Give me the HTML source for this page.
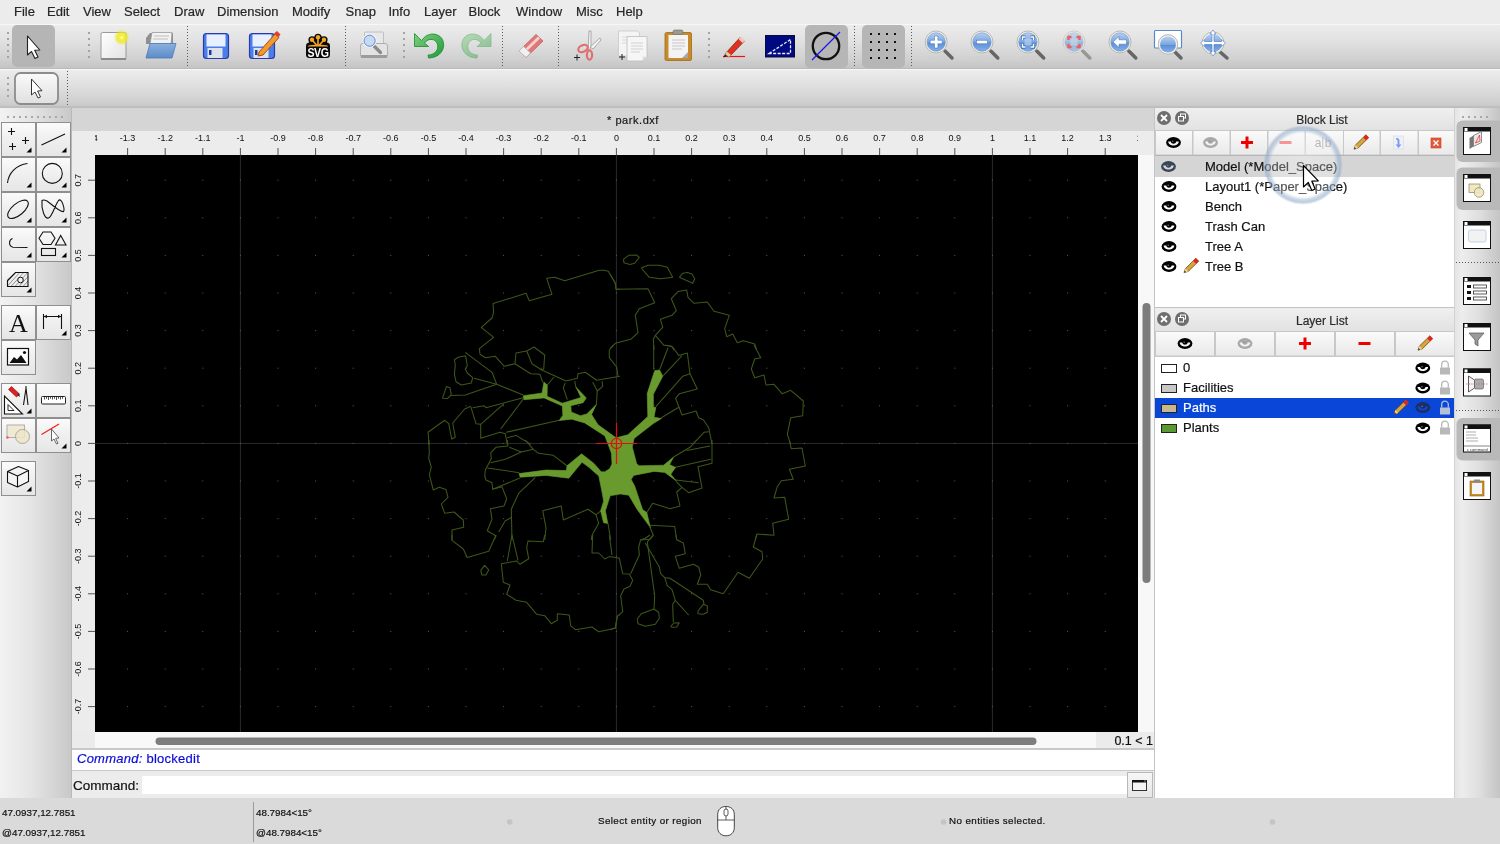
<!DOCTYPE html>
<html><head><meta charset="utf-8">
<style>
*{margin:0;padding:0;box-sizing:border-box}
body{-webkit-text-stroke:0.2px currentColor}
html,body{width:1500px;height:844px;overflow:hidden;will-change:transform;background:#ececec;font-family:"Liberation Sans",sans-serif;color:#222}
.a{position:absolute}
#menubar{left:0;top:0;width:1500px;height:24px;background:#ececec}
#menubar span{position:absolute;top:4px;font-size:13px;color:#262626}
#tb1{left:0;top:24px;width:1500px;height:45px;background:linear-gradient(#ececec,#e2e2e2 35%,#d0d0d0 80%,#c4c4c4);border-top:1px solid #f7f7f7;border-bottom:1px solid #bababa}
#tb2{left:0;top:69px;width:1500px;height:38px;background:linear-gradient(#ececec,#e0e0e0 40%,#d0d0d0 85%,#c8c8c8);border-top:1px solid #f7f7f7}
#tbline{left:0;top:106px;width:1500px;height:2px;background:#bebebe}
#leftdock{left:0;top:108px;width:71px;height:690px;background:linear-gradient(90deg,#f2f2f2,#e6e6e6 40%,#c9c9c9)}
#leftborder{left:71px;top:108px;width:1px;height:690px;background:#b9b9b9}
#mdititle{left:72px;top:108px;width:1083px;height:23px;background:#d5d5d5}
#hruler{left:72px;top:131px;width:1082px;height:24px;background:#ececec}
#vruler{left:72px;top:155px;width:23px;height:577px;background:#ececec}
#canvas{left:95px;top:155px;width:1043px;height:577px;background:#000;overflow:hidden}
#vscroll{left:1138px;top:155px;width:16px;height:577px;background:#f8f8f8}
#hscroll{left:95px;top:732px;width:1001px;height:16px;background:#f8f8f8}
#cornerL{left:72px;top:732px;width:23px;height:16px;background:#ebebeb}
#scalebox{left:1096px;top:732px;width:58px;height:16px;background:#ebebeb;font-size:12.5px;text-align:right;padding-right:1px;line-height:19px;color:#111}
#cmdsep{left:72px;top:748px;width:1082px;height:2px;background:#c8c8c8}
#cmdhist{left:72px;top:750px;width:1082px;height:21px;background:#fff;border-bottom:1px solid #c8c8c8;font-size:13px;line-height:17px;padding-left:5px;color:#0c0cd8;letter-spacing:0.25px}
#cmdline{left:72px;top:771px;width:1082px;height:28px;background:#ececec;font-size:13px;color:#111}
#status{left:0;top:798px;width:1500px;height:46px;background:#dadada}
.st{position:absolute;font-size:9.8px;color:#111;letter-spacing:0px}
#dock{left:1154px;top:108px;width:301px;height:690px;background:#ececec;border-left:1px solid #c2c2c2}
#rtb{left:1455px;top:108px;width:45px;height:690px;background:linear-gradient(90deg,#eeeeee,#dcdcdc 50%,#c6c6c6)}
</style></head><body>
<div id="menubar" class="a">
<span style="left:14px">File</span><span style="left:47px">Edit</span><span style="left:83px">View</span><span style="left:124px">Select</span><span style="left:174px">Draw</span><span style="left:217px">Dimension</span><span style="left:292px">Modify</span><span style="left:345.5px">Snap</span><span style="left:388.5px">Info</span><span style="left:424px">Layer</span><span style="left:468.5px">Block</span><span style="left:516px">Window</span><span style="left:576px">Misc</span><span style="left:616px">Help</span>
</div>
<div id="tb1" class="a"></div>
<div id="tb2" class="a"></div>
<div id="tbline" class="a"></div>
<!--TB1-->
<svg class="a" style="left:0;top:0" width="1500" height="108" viewBox="0 0 1500 108">
<defs>
<linearGradient id="gBlueLens" x1="0" y1="0" x2="0" y2="1"><stop offset="0" stop-color="#b7d0f0"/><stop offset="0.5" stop-color="#7aa6e0"/><stop offset="0.55" stop-color="#5a8fd8"/><stop offset="1" stop-color="#86b0ea"/></linearGradient>
<linearGradient id="gBlueLensF" x1="0" y1="0" x2="0" y2="1"><stop offset="0" stop-color="#d5e2f2"/><stop offset="1" stop-color="#b4c9e6"/></linearGradient>
<linearGradient id="gPage" x1="0" y1="0" x2="1" y2="1"><stop offset="0" stop-color="#ffffff"/><stop offset="1" stop-color="#e2e2e2"/></linearGradient>
<radialGradient id="gGlow"><stop offset="0" stop-color="#ffffe0"/><stop offset="0.25" stop-color="#f8f040"/><stop offset="0.6" stop-color="#eee820" stop-opacity="0.8"/><stop offset="1" stop-color="#eee820" stop-opacity="0"/></radialGradient>
<linearGradient id="gFolder" x1="0" y1="0" x2="0" y2="1"><stop offset="0" stop-color="#8ab0e0"/><stop offset="1" stop-color="#5d8cc8"/></linearGradient>
<linearGradient id="gUndo" x1="0" y1="0" x2="1" y2="1"><stop offset="0" stop-color="#7fd07a"/><stop offset="1" stop-color="#1e9a3a"/></linearGradient>
<linearGradient id="gBtn2" x1="0" y1="0" x2="0" y2="1"><stop offset="0" stop-color="#fafafa"/><stop offset="1" stop-color="#e0e0e0"/></linearGradient>
<g id="lensHandle"><line x1="0" y1="0" x2="8" y2="8" stroke="#6a6a6a" stroke-width="4" stroke-linecap="round"/></g>
</defs>
<!-- handle dots -->
<g fill="#a3a3a3">
<rect x="7" y="32" width="2" height="2"/><rect x="7" y="38" width="2" height="2"/><rect x="7" y="44" width="2" height="2"/><rect x="7" y="50" width="2" height="2"/><rect x="7" y="56" width="2" height="2"/>
<rect x="88" y="32" width="2" height="2"/><rect x="88" y="38" width="2" height="2"/><rect x="88" y="44" width="2" height="2"/><rect x="88" y="50" width="2" height="2"/><rect x="88" y="56" width="2" height="2"/>
<rect x="403" y="32" width="2" height="2"/><rect x="403" y="38" width="2" height="2"/><rect x="403" y="44" width="2" height="2"/><rect x="403" y="50" width="2" height="2"/><rect x="403" y="56" width="2" height="2"/>
<rect x="708" y="32" width="2" height="2"/><rect x="708" y="38" width="2" height="2"/><rect x="708" y="44" width="2" height="2"/><rect x="708" y="50" width="2" height="2"/><rect x="708" y="56" width="2" height="2"/>
<rect x="7" y="77" width="2" height="2"/><rect x="7" y="83" width="2" height="2"/><rect x="7" y="89" width="2" height="2"/><rect x="7" y="95" width="2" height="2"/>
</g>
<!-- fine separators -->
<g stroke="#5a5a5a" stroke-width="1" stroke-dasharray="1 2">
<line x1="187.5" y1="26" x2="187.5" y2="67"/><line x1="345.5" y1="26" x2="345.5" y2="67"/><line x1="502.5" y1="26" x2="502.5" y2="67"/><line x1="558.5" y1="26" x2="558.5" y2="67"/><line x1="854.5" y1="26" x2="854.5" y2="67"/><line x1="911.5" y1="26" x2="911.5" y2="67"/>
<line x1="67.5" y1="71" x2="67.5" y2="106"/>
</g>
<!-- selected select button -->
<rect x="12" y="25" width="43" height="42" rx="5" fill="#b5b5b5"/>
<path d="M27.5 36 L27.5 55 L31.5 51.5 L35 58.5 L38 57 L34.7 50.3 L39.8 50 Z" fill="#fff" stroke="#222" stroke-width="1.1" stroke-linejoin="round"/>
<!-- new -->
<rect x="101" y="32.5" width="25" height="27" rx="1.5" fill="url(#gPage)" stroke="#9a9a9a" stroke-width="1"/>
<rect x="101" y="58" width="25" height="2" fill="#8a8a8a"/>
<circle cx="121.7" cy="37.5" r="8" fill="url(#gGlow)"/>
<!-- open -->
<path d="M146 38 L150 33 L173 33 L173 44 L146 44 Z" fill="#8f8f8f"/>
<path d="M152 32.5 L172 32.5 L171 44 L150 44 Z" fill="#f2f2f2" stroke="#9a9a9a" stroke-width="0.8"/>
<line x1="154" y1="36" x2="169" y2="36" stroke="#bdbdbd"/><line x1="153" y1="39" x2="168" y2="39" stroke="#bdbdbd"/>
<path d="M150 43.5 L176 43.5 L172 58 L146 58 Z" fill="url(#gFolder)" stroke="#4a78b8" stroke-width="0.8"/>
<!-- save -->
<g id="floppy">
<rect x="203.5" y="33.5" width="25" height="25" rx="3" fill="#4a7ee8" stroke="#2a3aa8" stroke-width="1.2"/>
<rect x="206.5" y="34.5" width="19" height="12" fill="#e8f0ff"/>
<rect x="207.5" y="48" width="15" height="10" fill="#dde2ea"/>
<rect x="209" y="50" width="2.5" height="5" fill="#1a3aa0"/>
</g>
<use href="#floppy" x="46"/>
<path d="M259 52 L275 34 L279 37.5 L263 55 L258 56 Z" fill="#f09a30" stroke="#a04010" stroke-width="0.9"/>
<path d="M274 33.5 L277 31 L280.5 34.5 L278.5 37 Z" fill="#e04030"/>
<!-- svg -->
<g>
<rect x="306" y="42.5" width="24" height="15.5" rx="3.5" fill="#0a0a0a"/>
<circle cx="318" cy="37.3" r="3.6" fill="#0a0a0a"/><circle cx="312" cy="39.8" r="3.6" fill="#0a0a0a"/><circle cx="324" cy="39.8" r="3.6" fill="#0a0a0a"/>
<path d="M308 46 L310 40 L314 37 L318 34.5 L322 37 L326 40 L328 46 Z" fill="#0a0a0a"/>
<g stroke="#f5a623" stroke-width="1.6" stroke-linecap="round"><line x1="318" y1="37.5" x2="318" y2="45"/><line x1="312.2" y1="40" x2="316.5" y2="45"/><line x1="323.8" y1="40" x2="319.5" y2="45"/></g>
<circle cx="318" cy="37.3" r="2.2" fill="#f5a623"/><circle cx="312" cy="39.8" r="2.2" fill="#f5a623"/><circle cx="324" cy="39.8" r="2.2" fill="#f5a623"/>
<path d="M308 45.8 C312 44.5 324 44.5 328 45.8 L328 46.4 L308 46.4 Z" fill="#f5a623"/>
<text x="0" y="0" transform="translate(318 57) scale(0.88 1)" font-family="Liberation Sans" font-weight="bold" font-size="12" fill="#fff" text-anchor="middle" letter-spacing="-0.4">SVG</text>
</g>
<!-- print preview -->
<rect x="364.5" y="32" width="19" height="14" rx="1" fill="#e8e8e8" stroke="#b5b5b5" stroke-width="0.8"/>
<rect x="360.5" y="43.5" width="27" height="14" rx="2.5" fill="#e3e3e3" stroke="#a8a8a8" stroke-width="0.9"/>
<rect x="361" y="55" width="26" height="3" fill="#9c9c9c"/>
<line x1="372" y1="44" x2="380.5" y2="52.5" stroke="#8a8a8a" stroke-width="3.2" stroke-linecap="round"/>
<circle cx="369.6" cy="40.7" r="6.3" fill="#d8e6f6" stroke="#ffffff" stroke-width="1.2"/>
<circle cx="369.6" cy="40.7" r="5.6" fill="#c6daf2" stroke="#5a8ad0" stroke-width="1"/>
<!-- undo -->
<path d="M421.5 40.5 C426 34 433 32.5 438.5 35.5 C444 38.5 445 46 442 51 C439.5 55.5 434 58 428.5 58 L428 55 C432.5 55 436.5 52.5 437.5 48.5 C438.5 44 436 40 432 39.5 C429 39 426.5 40.5 424.5 43 L428.5 46.5 L414.5 46.5 L414.5 33.5 L418.5 37.5 Z" fill="url(#gUndo)" stroke="#178a30" stroke-width="0.8"/>
<!-- redo faded -->
<g opacity="0.45"><path d="M484 40.5 C479.5 34 472.5 32.5 467 35.5 C461.5 38.5 460.5 46 463.5 51 C466 55.5 471.5 58 477 58 L477.5 55 C473 55 469 52.5 468 48.5 C467 44 469.5 40 473.5 39.5 C476.5 39 479 40.5 481 43 L477 46.5 L491 46.5 L491 33.5 L487 37.5 Z" fill="url(#gUndo)" stroke="#178a30" stroke-width="0.8"/></g>
<!-- eraser -->
<ellipse cx="531" cy="57.5" rx="11" ry="1.6" fill="#d0d0d0"/>
<path d="M519 51 L536 34.5 L543 41 L526 57.5 Z" fill="#e07878" stroke="#c06060" stroke-width="0.8"/>
<path d="M521 53 L538 36.5 L540 38.5 L523 55 Z" fill="#f4d0d0"/>
<path d="M519 51 L523.5 46.5 L530.5 53 L526 57.5 Z" fill="#f0f0f0" stroke="#bbbbbb" stroke-width="0.8"/>
<!-- scissors -->
<path d="M588 52 L589 31 L591 31 L591 47 Z" fill="#f2f2f2" stroke="#9a9a9a" stroke-width="0.8"/>
<path d="M590 47 L600 38 L601 40 L593 49 Z" fill="#f2f2f2" stroke="#9a9a9a" stroke-width="0.8"/>
<ellipse cx="583" cy="48.5" rx="5" ry="3.2" fill="none" stroke="#e07070" stroke-width="2.2" transform="rotate(-25 583 48.5)"/>
<ellipse cx="589.5" cy="55" rx="2.6" ry="4.6" fill="none" stroke="#e07070" stroke-width="2.2"/>
<path d="M574 57.5 h6 M577 54.5 v6" stroke="#222" stroke-width="1"/>
<!-- copy -->
<path d="M618.5 31 h19 l2 2 v23 h-21 z" fill="#f4f4f4" stroke="#c8c8c8" stroke-width="0.8"/>
<g stroke="#d8d8d8"><line x1="622" y1="37" x2="632" y2="37"/><line x1="622" y1="40" x2="632" y2="40"/><line x1="622" y1="43" x2="632" y2="43"/></g>
<path d="M627 36.5 h20 v20 l-4.5 4.5 h-15.5 z" fill="#f6f6f6" stroke="#bdbdbd" stroke-width="0.8"/>
<path d="M647 56.5 l-4.5 4.5 v-4.5 z" fill="#dddddd"/>
<g stroke="#d0d0d0"><line x1="631" y1="43" x2="643" y2="43"/><line x1="631" y1="46" x2="643" y2="46"/><line x1="631" y1="49" x2="643" y2="49"/><line x1="631" y1="52" x2="640" y2="52"/></g>
<path d="M619 57 h6 M622 54 v6" stroke="#222" stroke-width="1"/>
<!-- paste -->
<rect x="665" y="32.5" width="26.5" height="28" rx="1.5" fill="#c98a2a" stroke="#9a6a20" stroke-width="0.8"/>
<rect x="668.5" y="35" width="19.5" height="23" fill="#f4f4f4"/>
<path d="M688 52 v6 h-6 z" fill="#a8a8a8"/>
<rect x="673" y="30" width="10" height="4.5" rx="1.5" fill="#9a9a90" stroke="#707068" stroke-width="0.6"/>
<g stroke="#c8c8c8"><line x1="672" y1="40" x2="685" y2="40"/><line x1="672" y1="43" x2="685" y2="43"/><line x1="672" y1="46" x2="685" y2="46"/><line x1="672" y1="49" x2="682" y2="49"/></g>
<!-- pencil draw -->
<line x1="723" y1="56.5" x2="745" y2="56.5" stroke="#ee1111" stroke-width="1.2"/>
<path d="M725 54 L740 37.5 L744 41.5 L729 57 Z" fill="#e03020" stroke="#7a2a10" stroke-width="0.8"/>
<path d="M725 54 L723.5 57.5 L727 56 Z" fill="#222"/>
<path d="M725 54 L727 51.5 L731 55 L729 57 Z" fill="#e8c8a0"/>
<path d="M738.5 39 L741 36.5 L745 40.5 L742.5 43 Z" fill="#f0c8c0"/>
<!-- blue triangle -->
<rect x="765.5" y="35.5" width="29" height="21.5" fill="#000a80" stroke="#0a0a40" stroke-width="1"/>
<path d="M769 53.5 L790.5 39.5 L790.5 53.5 Z" fill="none" stroke="#e8e8ff" stroke-width="1.3" stroke-dasharray="3 1.5"/>
<!-- selected circle btn -->
<rect x="805" y="25" width="43" height="43" rx="5" fill="#b6b6b6"/>
<circle cx="826" cy="46" r="13.2" fill="none" stroke="#111" stroke-width="2.3"/>
<line x1="812" y1="60" x2="840" y2="32" stroke="#1a1aee" stroke-width="1.2"/>
<!-- grid btn -->
<rect x="862" y="25" width="43" height="43" rx="5" fill="#b6b6b6"/>
<g fill="#111">
<rect x="870" y="33" width="2" height="2"/><rect x="878" y="33" width="2" height="2"/><rect x="886" y="33" width="2" height="2"/><rect x="894" y="33" width="2" height="2"/>
<rect x="870" y="41" width="2" height="2"/><rect x="878" y="41" width="2" height="2"/><rect x="886" y="41" width="2" height="2"/><rect x="894" y="41" width="2" height="2"/>
<rect x="870" y="49" width="2" height="2"/><rect x="878" y="49" width="2" height="2"/><rect x="886" y="49" width="2" height="2"/><rect x="894" y="49" width="2" height="2"/>
<rect x="870" y="57" width="2" height="2"/><rect x="878" y="57" width="2" height="2"/><rect x="886" y="57" width="2" height="2"/><rect x="894" y="57" width="2" height="2"/>
</g>
<!-- zoom lenses -->
<g id="lens1">
<ellipse cx="940" cy="58" rx="12" ry="2.5" fill="#cfcfcf" opacity="0.7"/>
<line x1="945" y1="51" x2="952" y2="58" stroke="#666" stroke-width="3.5" stroke-linecap="round"/>
<circle cx="936.2" cy="42" r="11" fill="#f0f0ea" stroke="#b8b8b0" stroke-width="1"/>
<circle cx="936.2" cy="42" r="9.2" fill="url(#gBlueLens)" stroke="#6a90c8" stroke-width="0.6"/>
</g>
<path d="M934.5 36 h3.4 v4.3 h4.3 v3.4 h-4.3 v4.3 h-3.4 v-4.3 h-4.3 v-3.4 h4.3 z" fill="#fff" stroke="#3a6ab0" stroke-width="0.5"/>
<use href="#lens1" x="45.8"/>
<rect x="976.5" y="40.2" width="11" height="3.6" fill="#fff" stroke="#3a6ab0" stroke-width="0.5"/>
<use href="#lens1" x="91.7"/>
<rect x="1024.5" y="38.5" width="7" height="7" fill="#b8d0ee" opacity="0.7"/><g fill="none" stroke="#2a5aa8" stroke-width="3"><path d="M1022.5 40 v-3 h3 M1030.5 37 h3 v3 M1033.5 44 v3 h-3 M1025.5 47 h-3 v-3"/></g><g fill="none" stroke="#fff" stroke-width="1.6"><path d="M1022.5 40 v-3 h3 M1030.5 37 h3 v3 M1033.5 44 v3 h-3 M1025.5 47 h-3 v-3"/></g>
<g opacity="0.55"><use href="#lens1" x="137.8"/></g>
<rect x="1070.5" y="38.5" width="7" height="7" fill="#c8d4e4" opacity="0.7"/><g fill="none" stroke="#e86060" stroke-width="2.4"><path d="M1068.5 40 v-3 h3 M1076.5 37 h3 v3 M1079.5 44 v3 h-3 M1071.5 47 h-3 v-3"/></g>
<use href="#lens1" x="183.8"/>
<path d="M1113 42 L1119 36.5 V39.8 H1126.5 V44.2 H1119 V47.5 Z" fill="#fff" stroke="#3a6ab0" stroke-width="0.5"/>
<!-- zoom window -->
<rect x="1154.5" y="30.5" width="27" height="17.5" rx="1" fill="#fff" stroke="#5a88cc" stroke-width="1.2"/>
<line x1="1174" y1="51" x2="1181" y2="58" stroke="#666" stroke-width="3.5" stroke-linecap="round"/>
<circle cx="1168" cy="44.5" r="9.8" fill="#f0f0ea" stroke="#b8b8b0" stroke-width="1"/>
<circle cx="1168" cy="44.5" r="8" fill="url(#gBlueLens)"/>
<!-- pan -->
<line x1="1219" y1="51" x2="1227" y2="58" stroke="#666" stroke-width="3.5" stroke-linecap="round"/>
<circle cx="1213" cy="43" r="11" fill="#f0f0ea" stroke="#b8b8b0" stroke-width="1"/>
<circle cx="1213" cy="43" r="9.2" fill="url(#gBlueLens)"/>
<path d="M1213 30 l-3 4 h2 v7.5 h-7.5 v-2 l-4 3.5 l4 3.5 v-2 h7.5 v7.5 h-2 l3 4 l3 -4 h-2 v-7.5 h7.5 v2 l4 -3.5 l-4 -3.5 v2 h-7.5 v-7.5 h2 z" fill="#fff" stroke="#4a78c0" stroke-width="0.6"/>
<!-- toolbar2 select btn -->
<rect x="15" y="73" width="43" height="31" rx="5.5" fill="url(#gBtn2)" stroke="#8c8c8c" stroke-width="1.8"/>
<path d="M31.5 79 L31.5 95 L35 92 L38 98 L40.5 97 L37.6 91 L42 90.7 Z" fill="#fff" stroke="#333" stroke-width="1" stroke-linejoin="round"/>
</svg>

<!--/TB1-->
<div id="leftdock" class="a"></div>
<div id="leftborder" class="a"></div>
<!--LEFT-->
<svg class="a" style="left:0;top:108px" width="72" height="400" viewBox="0 108 72 400">
<defs>
<linearGradient id="gTbtn" x1="0" y1="0" x2="0" y2="1"><stop offset="0" stop-color="#fbfbfb"/><stop offset="0.45" stop-color="#f0f0f0"/><stop offset="1" stop-color="#e6e6e6"/></linearGradient>
<path id="ctri" d="M0 5 L5 0 L5 5 Z" fill="#000"/>
</defs>
<g fill="#a8a8a8"><rect x="7" y="116" width="2" height="2"/><rect x="13" y="116" width="2" height="2"/><rect x="19" y="116" width="2" height="2"/><rect x="25" y="116" width="2" height="2"/><rect x="31" y="116" width="2" height="2"/><rect x="37" y="116" width="2" height="2"/><rect x="43" y="116" width="2" height="2"/><rect x="49" y="116" width="2" height="2"/><rect x="55" y="116" width="2" height="2"/><rect x="61" y="116" width="2" height="2"/></g>
<g fill="url(#gTbtn)" stroke="#8f8f8f" stroke-width="1">
<rect x="1.5" y="122.5" width="34" height="34"/><rect x="36.5" y="122.5" width="34" height="34"/>
<rect x="1.5" y="157.5" width="34" height="34"/><rect x="36.5" y="157.5" width="34" height="34"/>
<rect x="1.5" y="192.5" width="34" height="34"/><rect x="36.5" y="192.5" width="34" height="34"/>
<rect x="1.5" y="227.5" width="34" height="34"/><rect x="36.5" y="227.5" width="34" height="34"/>
<rect x="1.5" y="262.5" width="34" height="34"/>
<rect x="1.5" y="305.5" width="34" height="34"/><rect x="36.5" y="305.5" width="34" height="34"/>
<rect x="1.5" y="340.5" width="34" height="34"/>
<rect x="1.5" y="383.5" width="34" height="34"/><rect x="36.5" y="383.5" width="34" height="34"/>
<rect x="1.5" y="418.5" width="34" height="34"/><rect x="36.5" y="418.5" width="34" height="34"/>
<rect x="1.5" y="461.5" width="34" height="34"/>
</g>
<g>
<use href="#ctri" x="26.5" y="147.5"/><use href="#ctri" x="61.5" y="147.5"/>
<use href="#ctri" x="26.5" y="182.5"/><use href="#ctri" x="61.5" y="182.5"/>
<use href="#ctri" x="26.5" y="217.5"/><use href="#ctri" x="61.5" y="217.5"/>
<use href="#ctri" x="26.5" y="252.5"/><use href="#ctri" x="61.5" y="252.5"/>
<use href="#ctri" x="26.5" y="287.5"/>
<use href="#ctri" x="61.5" y="330.5"/>
<use href="#ctri" x="26.5" y="408.5"/>
<use href="#ctri" x="61.5" y="443.5"/>
<use href="#ctri" x="26.5" y="486.5"/>
</g>
<g fill="none" stroke="#111" stroke-width="1.1">
<path d="M8 131.5 h7 M11.5 128 v7 M22 140.5 h7 M25.5 137 v7 M9 146.5 h7 M12.5 143 v7"/>
<path d="M41.5 145 L65 134"/>
<path d="M7.5 183 C8.5 173 16 165 27.5 163.5"/>
<circle cx="52.3" cy="173.4" r="10"/>
<ellipse cx="18" cy="209.3" rx="12.5" ry="5.8" transform="rotate(-40 18 209.3)"/>
<path d="M42 200.5 C41 210 45 219 48.5 218 C52 217 55 205 58.5 200.5 C62 197 65 210 63.5 211.5 C61 213 50 203 47 201 C45 200 43 199.5 42 200.5 Z"/>
<path d="M12.5 238.5 C9 239.5 8 246 13 247.3 L27.5 247.5"/>
<path d="M43 232 L51 232 L55 238.2 L51 244.5 L43 244.5 L39 238.2 Z"/>
<path d="M60.7 235.5 L66 245 L55.5 245 Z"/>
<rect x="41.5" y="248.5" width="14" height="7"/>
</g>
<g>
<clipPath id="hclip"><path d="M7.5 280.5 L15.5 272.5 L28 272.5 L28 286.5 L7.5 286.5 Z"/></clipPath>
<g clip-path="url(#hclip)" stroke="#555" stroke-width="0.6"><path d="M2 292 l20 -22 M6 292 l20 -22 M10 292 l20 -22 M14 292 l20 -22 M18 292 l20 -22 M22 292 l20 -22 M26 292 l20 -22 M-2 292 l20 -22"/></g>
<path d="M7.5 280.5 L15.5 272.5 L28 272.5 L28 286.5 L7.5 286.5 Z" fill="none" stroke="#111" stroke-width="1.1"/>
<circle cx="20.5" cy="280" r="2.8" fill="#f0f0f0" stroke="#111" stroke-width="1"/>
</g>
<text x="18.3" y="332" font-family="Liberation Serif" font-size="26" text-anchor="middle" fill="#111">A</text>
<g stroke="#111" fill="none" stroke-width="1.1"><path d="M43.5 314 v15 M61.5 314 v15 M44 316.5 h17"/></g>
<path d="M44 316.5 l3 -1.7 v3.4 z M61 316.5 l-3 -1.7 v3.4 z" fill="#111"/>
<!-- image -->
<rect x="7.5" y="348.5" width="21" height="16.5" fill="#fff" stroke="#111" stroke-width="1.2"/>
<path d="M9.5 363 L14 357 L17 359.5 L21 355 L26.5 363 Z" fill="#111"/>
<circle cx="24.5" cy="352.5" r="1.6" fill="#111"/>
<!-- drafting -->
<path d="M4.5 396 L4.5 414 L22.5 414 Z" fill="#fff" stroke="#111" stroke-width="1.1"/>
<path d="M8 404.5 L8 410.5 L14 410.5 Z" fill="none" stroke="#111" stroke-width="0.9"/>
<path d="M8.5 389.5 L16.5 397 L19.5 394 L11.5 386.5 Z" fill="#e02020" stroke="#801010" stroke-width="0.6"/>
<path d="M17 395 L20 397 L19 393 Z" fill="#333"/>
<path d="M26 388 L23.5 405 M26 388 L28 405 M26 386 v3" stroke="#111" stroke-width="1.1" fill="none"/>
<!-- ruler -->
<rect x="41.5" y="396.5" width="24" height="7.5" rx="1" fill="#fff" stroke="#222" stroke-width="1"/>
<path d="M44.5 397 v2.5 M46.5 397 v1.8 M48.5 397 v3 M50.5 397 v1.8 M52.5 397 v2.5 M54.5 397 v1.8 M56.5 397 v3 M58.5 397 v1.8 M60.5 397 v2.5 M62.5 397 v1.8" stroke="#222" stroke-width="0.8"/>
<!-- modify -->
<rect x="7" y="425" width="17.5" height="12.5" fill="#f0ead4" stroke="#a8a8a8" stroke-width="0.9"/>
<circle cx="22.5" cy="436.5" r="7" fill="#ede6c8" fill-opacity="0.85" stroke="#a8a090" stroke-width="0.9"/>
<circle cx="7.5" cy="437.5" r="1.2" fill="#ff5050"/>
<!-- info -->
<line x1="41.5" y1="434.5" x2="59" y2="424" stroke="#ee2222" stroke-width="1.3"/>
<path d="M51.5 429 L51.5 441 L54 439 L56.5 444 L58 443.3 L55.6 438.3 L59 438 Z" fill="#fff" stroke="#444" stroke-width="0.8" stroke-linejoin="round"/>
<!-- 3d -->
<path d="M7.5 471.5 L18.5 466.5 L28.5 470.5 L28.5 481.5 L17.5 487 L7.5 482.5 Z M7.5 471.5 L17.5 476 L28.5 470.5 M17.5 476 L17.5 487" fill="#f4f4f4" stroke="#111" stroke-width="1.1" stroke-linejoin="round"/>
</svg>

<!--/LEFT-->
<div id="mdititle" class="a"></div>
<div class="a" style="left:607px;top:109px;height:23px;font-size:11px;line-height:23px;color:#1a1a1a;letter-spacing:0.55px">* park.dxf</div>
<div id="hruler" class="a"></div>
<div id="vruler" class="a"></div>
<!--RULERS-->
<svg class="a" style="left:0;top:0" width="1500" height="844" viewBox="0 0 1500 844" id="rulers">
<defs><clipPath id="hrclip"><rect x="95" y="131" width="1043" height="24"/></clipPath><clipPath id="vrclip"><rect x="72" y="155" width="23" height="577"/></clipPath></defs>
<g clip-path="url(#hrclip)" font-family="Liberation Sans" font-size="9" fill="#111" text-anchor="middle">
<text x="90.0" y="141">-1.4</text>
<rect x="89.5" y="148" width="1" height="7" fill="#555"/>
<text x="127.6" y="141">-1.3</text>
<rect x="127.1" y="148" width="1" height="7" fill="#555"/>
<text x="165.2" y="141">-1.2</text>
<rect x="164.7" y="148" width="1" height="7" fill="#555"/>
<text x="202.8" y="141">-1.1</text>
<rect x="202.3" y="148" width="1" height="7" fill="#555"/>
<text x="240.4" y="141">-1</text>
<rect x="239.9" y="148" width="1" height="7" fill="#555"/>
<text x="278.0" y="141">-0.9</text>
<rect x="277.5" y="148" width="1" height="7" fill="#555"/>
<text x="315.6" y="141">-0.8</text>
<rect x="315.1" y="148" width="1" height="7" fill="#555"/>
<text x="353.2" y="141">-0.7</text>
<rect x="352.7" y="148" width="1" height="7" fill="#555"/>
<text x="390.8" y="141">-0.6</text>
<rect x="390.3" y="148" width="1" height="7" fill="#555"/>
<text x="428.4" y="141">-0.5</text>
<rect x="427.9" y="148" width="1" height="7" fill="#555"/>
<text x="466.0" y="141">-0.4</text>
<rect x="465.5" y="148" width="1" height="7" fill="#555"/>
<text x="503.6" y="141">-0.3</text>
<rect x="503.1" y="148" width="1" height="7" fill="#555"/>
<text x="541.2" y="141">-0.2</text>
<rect x="540.7" y="148" width="1" height="7" fill="#555"/>
<text x="578.8" y="141">-0.1</text>
<rect x="578.3" y="148" width="1" height="7" fill="#555"/>
<text x="616.4" y="141">0</text>
<rect x="615.9" y="148" width="1" height="7" fill="#555"/>
<text x="654.0" y="141">0.1</text>
<rect x="653.5" y="148" width="1" height="7" fill="#555"/>
<text x="691.6" y="141">0.2</text>
<rect x="691.1" y="148" width="1" height="7" fill="#555"/>
<text x="729.2" y="141">0.3</text>
<rect x="728.7" y="148" width="1" height="7" fill="#555"/>
<text x="766.8" y="141">0.4</text>
<rect x="766.3" y="148" width="1" height="7" fill="#555"/>
<text x="804.4" y="141">0.5</text>
<rect x="803.9" y="148" width="1" height="7" fill="#555"/>
<text x="842.0" y="141">0.6</text>
<rect x="841.5" y="148" width="1" height="7" fill="#555"/>
<text x="879.6" y="141">0.7</text>
<rect x="879.1" y="148" width="1" height="7" fill="#555"/>
<text x="917.2" y="141">0.8</text>
<rect x="916.7" y="148" width="1" height="7" fill="#555"/>
<text x="954.8" y="141">0.9</text>
<rect x="954.3" y="148" width="1" height="7" fill="#555"/>
<text x="992.4" y="141">1</text>
<rect x="991.9" y="148" width="1" height="7" fill="#555"/>
<text x="1030.0" y="141">1.1</text>
<rect x="1029.5" y="148" width="1" height="7" fill="#555"/>
<text x="1067.6" y="141">1.2</text>
<rect x="1067.1" y="148" width="1" height="7" fill="#555"/>
<text x="1105.2" y="141">1.3</text>
<rect x="1104.7" y="148" width="1" height="7" fill="#555"/>
<text x="1142.8" y="141">1.4</text>
<rect x="1142.3" y="148" width="1" height="7" fill="#555"/>
</g>
<g clip-path="url(#vrclip)" font-family="Liberation Sans" font-size="9" fill="#111" text-anchor="middle">
<text x="0" y="0" transform="translate(81 744.2) rotate(-90)">-0.8</text>
<rect x="88" y="743.7" width="7" height="1" fill="#555"/>
<text x="0" y="0" transform="translate(81 706.6) rotate(-90)">-0.7</text>
<rect x="88" y="706.1" width="7" height="1" fill="#555"/>
<text x="0" y="0" transform="translate(81 669.0) rotate(-90)">-0.6</text>
<rect x="88" y="668.5" width="7" height="1" fill="#555"/>
<text x="0" y="0" transform="translate(81 631.4) rotate(-90)">-0.5</text>
<rect x="88" y="630.9" width="7" height="1" fill="#555"/>
<text x="0" y="0" transform="translate(81 593.8) rotate(-90)">-0.4</text>
<rect x="88" y="593.3" width="7" height="1" fill="#555"/>
<text x="0" y="0" transform="translate(81 556.2) rotate(-90)">-0.3</text>
<rect x="88" y="555.7" width="7" height="1" fill="#555"/>
<text x="0" y="0" transform="translate(81 518.6) rotate(-90)">-0.2</text>
<rect x="88" y="518.1" width="7" height="1" fill="#555"/>
<text x="0" y="0" transform="translate(81 481.0) rotate(-90)">-0.1</text>
<rect x="88" y="480.5" width="7" height="1" fill="#555"/>
<text x="0" y="0" transform="translate(81 443.4) rotate(-90)">0</text>
<rect x="88" y="442.9" width="7" height="1" fill="#555"/>
<text x="0" y="0" transform="translate(81 405.8) rotate(-90)">0.1</text>
<rect x="88" y="405.3" width="7" height="1" fill="#555"/>
<text x="0" y="0" transform="translate(81 368.2) rotate(-90)">0.2</text>
<rect x="88" y="367.7" width="7" height="1" fill="#555"/>
<text x="0" y="0" transform="translate(81 330.6) rotate(-90)">0.3</text>
<rect x="88" y="330.1" width="7" height="1" fill="#555"/>
<text x="0" y="0" transform="translate(81 293.0) rotate(-90)">0.4</text>
<rect x="88" y="292.5" width="7" height="1" fill="#555"/>
<text x="0" y="0" transform="translate(81 255.4) rotate(-90)">0.5</text>
<rect x="88" y="254.9" width="7" height="1" fill="#555"/>
<text x="0" y="0" transform="translate(81 217.8) rotate(-90)">0.6</text>
<rect x="88" y="217.3" width="7" height="1" fill="#555"/>
<text x="0" y="0" transform="translate(81 180.2) rotate(-90)">0.7</text>
<rect x="88" y="179.7" width="7" height="1" fill="#555"/>
<text x="0" y="0" transform="translate(81 142.6) rotate(-90)">0.8</text>
<rect x="88" y="142.1" width="7" height="1" fill="#555"/>
</g></svg>
<!--/RULERS-->
<div id="canvas" class="a"></div>
<!--GRID-->
<svg class="a" style="left:95px;top:155px" width="1043" height="577" viewBox="95 155 1043 577" id="grid">
<rect x="95" y="442.9" width="1043" height="1" fill="#2b2b2b"/>
<rect x="239.9" y="155" width="1" height="577" fill="#2b2b2b"/>
<rect x="615.9" y="155" width="1" height="577" fill="#2b2b2b"/>
<rect x="991.9" y="155" width="1" height="577" fill="#2b2b2b"/>
<g fill="#5e5e5e">
<rect x="127.1" y="706.1" width="1" height="1"/>
<rect x="127.1" y="668.5" width="1" height="1"/>
<rect x="127.1" y="630.9" width="1" height="1"/>
<rect x="127.1" y="593.3" width="1" height="1"/>
<rect x="127.1" y="555.7" width="1" height="1"/>
<rect x="127.1" y="518.1" width="1" height="1"/>
<rect x="127.1" y="480.5" width="1" height="1"/>
<rect x="127.1" y="442.9" width="1" height="1"/>
<rect x="127.1" y="405.3" width="1" height="1"/>
<rect x="127.1" y="367.7" width="1" height="1"/>
<rect x="127.1" y="330.1" width="1" height="1"/>
<rect x="127.1" y="292.5" width="1" height="1"/>
<rect x="127.1" y="254.9" width="1" height="1"/>
<rect x="127.1" y="217.3" width="1" height="1"/>
<rect x="127.1" y="179.7" width="1" height="1"/>
<rect x="164.7" y="706.1" width="1" height="1"/>
<rect x="164.7" y="668.5" width="1" height="1"/>
<rect x="164.7" y="630.9" width="1" height="1"/>
<rect x="164.7" y="593.3" width="1" height="1"/>
<rect x="164.7" y="555.7" width="1" height="1"/>
<rect x="164.7" y="518.1" width="1" height="1"/>
<rect x="164.7" y="480.5" width="1" height="1"/>
<rect x="164.7" y="442.9" width="1" height="1"/>
<rect x="164.7" y="405.3" width="1" height="1"/>
<rect x="164.7" y="367.7" width="1" height="1"/>
<rect x="164.7" y="330.1" width="1" height="1"/>
<rect x="164.7" y="292.5" width="1" height="1"/>
<rect x="164.7" y="254.9" width="1" height="1"/>
<rect x="164.7" y="217.3" width="1" height="1"/>
<rect x="164.7" y="179.7" width="1" height="1"/>
<rect x="202.3" y="706.1" width="1" height="1"/>
<rect x="202.3" y="668.5" width="1" height="1"/>
<rect x="202.3" y="630.9" width="1" height="1"/>
<rect x="202.3" y="593.3" width="1" height="1"/>
<rect x="202.3" y="555.7" width="1" height="1"/>
<rect x="202.3" y="518.1" width="1" height="1"/>
<rect x="202.3" y="480.5" width="1" height="1"/>
<rect x="202.3" y="442.9" width="1" height="1"/>
<rect x="202.3" y="405.3" width="1" height="1"/>
<rect x="202.3" y="367.7" width="1" height="1"/>
<rect x="202.3" y="330.1" width="1" height="1"/>
<rect x="202.3" y="292.5" width="1" height="1"/>
<rect x="202.3" y="254.9" width="1" height="1"/>
<rect x="202.3" y="217.3" width="1" height="1"/>
<rect x="202.3" y="179.7" width="1" height="1"/>
<rect x="239.9" y="706.1" width="1" height="1"/>
<rect x="239.9" y="668.5" width="1" height="1"/>
<rect x="239.9" y="630.9" width="1" height="1"/>
<rect x="239.9" y="593.3" width="1" height="1"/>
<rect x="239.9" y="555.7" width="1" height="1"/>
<rect x="239.9" y="518.1" width="1" height="1"/>
<rect x="239.9" y="480.5" width="1" height="1"/>
<rect x="239.9" y="442.9" width="1" height="1"/>
<rect x="239.9" y="405.3" width="1" height="1"/>
<rect x="239.9" y="367.7" width="1" height="1"/>
<rect x="239.9" y="330.1" width="1" height="1"/>
<rect x="239.9" y="292.5" width="1" height="1"/>
<rect x="239.9" y="254.9" width="1" height="1"/>
<rect x="239.9" y="217.3" width="1" height="1"/>
<rect x="239.9" y="179.7" width="1" height="1"/>
<rect x="277.5" y="706.1" width="1" height="1"/>
<rect x="277.5" y="668.5" width="1" height="1"/>
<rect x="277.5" y="630.9" width="1" height="1"/>
<rect x="277.5" y="593.3" width="1" height="1"/>
<rect x="277.5" y="555.7" width="1" height="1"/>
<rect x="277.5" y="518.1" width="1" height="1"/>
<rect x="277.5" y="480.5" width="1" height="1"/>
<rect x="277.5" y="442.9" width="1" height="1"/>
<rect x="277.5" y="405.3" width="1" height="1"/>
<rect x="277.5" y="367.7" width="1" height="1"/>
<rect x="277.5" y="330.1" width="1" height="1"/>
<rect x="277.5" y="292.5" width="1" height="1"/>
<rect x="277.5" y="254.9" width="1" height="1"/>
<rect x="277.5" y="217.3" width="1" height="1"/>
<rect x="277.5" y="179.7" width="1" height="1"/>
<rect x="315.1" y="706.1" width="1" height="1"/>
<rect x="315.1" y="668.5" width="1" height="1"/>
<rect x="315.1" y="630.9" width="1" height="1"/>
<rect x="315.1" y="593.3" width="1" height="1"/>
<rect x="315.1" y="555.7" width="1" height="1"/>
<rect x="315.1" y="518.1" width="1" height="1"/>
<rect x="315.1" y="480.5" width="1" height="1"/>
<rect x="315.1" y="442.9" width="1" height="1"/>
<rect x="315.1" y="405.3" width="1" height="1"/>
<rect x="315.1" y="367.7" width="1" height="1"/>
<rect x="315.1" y="330.1" width="1" height="1"/>
<rect x="315.1" y="292.5" width="1" height="1"/>
<rect x="315.1" y="254.9" width="1" height="1"/>
<rect x="315.1" y="217.3" width="1" height="1"/>
<rect x="315.1" y="179.7" width="1" height="1"/>
<rect x="352.7" y="706.1" width="1" height="1"/>
<rect x="352.7" y="668.5" width="1" height="1"/>
<rect x="352.7" y="630.9" width="1" height="1"/>
<rect x="352.7" y="593.3" width="1" height="1"/>
<rect x="352.7" y="555.7" width="1" height="1"/>
<rect x="352.7" y="518.1" width="1" height="1"/>
<rect x="352.7" y="480.5" width="1" height="1"/>
<rect x="352.7" y="442.9" width="1" height="1"/>
<rect x="352.7" y="405.3" width="1" height="1"/>
<rect x="352.7" y="367.7" width="1" height="1"/>
<rect x="352.7" y="330.1" width="1" height="1"/>
<rect x="352.7" y="292.5" width="1" height="1"/>
<rect x="352.7" y="254.9" width="1" height="1"/>
<rect x="352.7" y="217.3" width="1" height="1"/>
<rect x="352.7" y="179.7" width="1" height="1"/>
<rect x="390.3" y="706.1" width="1" height="1"/>
<rect x="390.3" y="668.5" width="1" height="1"/>
<rect x="390.3" y="630.9" width="1" height="1"/>
<rect x="390.3" y="593.3" width="1" height="1"/>
<rect x="390.3" y="555.7" width="1" height="1"/>
<rect x="390.3" y="518.1" width="1" height="1"/>
<rect x="390.3" y="480.5" width="1" height="1"/>
<rect x="390.3" y="442.9" width="1" height="1"/>
<rect x="390.3" y="405.3" width="1" height="1"/>
<rect x="390.3" y="367.7" width="1" height="1"/>
<rect x="390.3" y="330.1" width="1" height="1"/>
<rect x="390.3" y="292.5" width="1" height="1"/>
<rect x="390.3" y="254.9" width="1" height="1"/>
<rect x="390.3" y="217.3" width="1" height="1"/>
<rect x="390.3" y="179.7" width="1" height="1"/>
<rect x="427.9" y="706.1" width="1" height="1"/>
<rect x="427.9" y="668.5" width="1" height="1"/>
<rect x="427.9" y="630.9" width="1" height="1"/>
<rect x="427.9" y="593.3" width="1" height="1"/>
<rect x="427.9" y="555.7" width="1" height="1"/>
<rect x="427.9" y="518.1" width="1" height="1"/>
<rect x="427.9" y="480.5" width="1" height="1"/>
<rect x="427.9" y="442.9" width="1" height="1"/>
<rect x="427.9" y="405.3" width="1" height="1"/>
<rect x="427.9" y="367.7" width="1" height="1"/>
<rect x="427.9" y="330.1" width="1" height="1"/>
<rect x="427.9" y="292.5" width="1" height="1"/>
<rect x="427.9" y="254.9" width="1" height="1"/>
<rect x="427.9" y="217.3" width="1" height="1"/>
<rect x="427.9" y="179.7" width="1" height="1"/>
<rect x="465.5" y="706.1" width="1" height="1"/>
<rect x="465.5" y="668.5" width="1" height="1"/>
<rect x="465.5" y="630.9" width="1" height="1"/>
<rect x="465.5" y="593.3" width="1" height="1"/>
<rect x="465.5" y="555.7" width="1" height="1"/>
<rect x="465.5" y="518.1" width="1" height="1"/>
<rect x="465.5" y="480.5" width="1" height="1"/>
<rect x="465.5" y="442.9" width="1" height="1"/>
<rect x="465.5" y="405.3" width="1" height="1"/>
<rect x="465.5" y="367.7" width="1" height="1"/>
<rect x="465.5" y="330.1" width="1" height="1"/>
<rect x="465.5" y="292.5" width="1" height="1"/>
<rect x="465.5" y="254.9" width="1" height="1"/>
<rect x="465.5" y="217.3" width="1" height="1"/>
<rect x="465.5" y="179.7" width="1" height="1"/>
<rect x="503.1" y="706.1" width="1" height="1"/>
<rect x="503.1" y="668.5" width="1" height="1"/>
<rect x="503.1" y="630.9" width="1" height="1"/>
<rect x="503.1" y="593.3" width="1" height="1"/>
<rect x="503.1" y="555.7" width="1" height="1"/>
<rect x="503.1" y="518.1" width="1" height="1"/>
<rect x="503.1" y="480.5" width="1" height="1"/>
<rect x="503.1" y="442.9" width="1" height="1"/>
<rect x="503.1" y="405.3" width="1" height="1"/>
<rect x="503.1" y="367.7" width="1" height="1"/>
<rect x="503.1" y="330.1" width="1" height="1"/>
<rect x="503.1" y="292.5" width="1" height="1"/>
<rect x="503.1" y="254.9" width="1" height="1"/>
<rect x="503.1" y="217.3" width="1" height="1"/>
<rect x="503.1" y="179.7" width="1" height="1"/>
<rect x="540.7" y="706.1" width="1" height="1"/>
<rect x="540.7" y="668.5" width="1" height="1"/>
<rect x="540.7" y="630.9" width="1" height="1"/>
<rect x="540.7" y="593.3" width="1" height="1"/>
<rect x="540.7" y="555.7" width="1" height="1"/>
<rect x="540.7" y="518.1" width="1" height="1"/>
<rect x="540.7" y="480.5" width="1" height="1"/>
<rect x="540.7" y="442.9" width="1" height="1"/>
<rect x="540.7" y="405.3" width="1" height="1"/>
<rect x="540.7" y="367.7" width="1" height="1"/>
<rect x="540.7" y="330.1" width="1" height="1"/>
<rect x="540.7" y="292.5" width="1" height="1"/>
<rect x="540.7" y="254.9" width="1" height="1"/>
<rect x="540.7" y="217.3" width="1" height="1"/>
<rect x="540.7" y="179.7" width="1" height="1"/>
<rect x="578.3" y="706.1" width="1" height="1"/>
<rect x="578.3" y="668.5" width="1" height="1"/>
<rect x="578.3" y="630.9" width="1" height="1"/>
<rect x="578.3" y="593.3" width="1" height="1"/>
<rect x="578.3" y="555.7" width="1" height="1"/>
<rect x="578.3" y="518.1" width="1" height="1"/>
<rect x="578.3" y="480.5" width="1" height="1"/>
<rect x="578.3" y="442.9" width="1" height="1"/>
<rect x="578.3" y="405.3" width="1" height="1"/>
<rect x="578.3" y="367.7" width="1" height="1"/>
<rect x="578.3" y="330.1" width="1" height="1"/>
<rect x="578.3" y="292.5" width="1" height="1"/>
<rect x="578.3" y="254.9" width="1" height="1"/>
<rect x="578.3" y="217.3" width="1" height="1"/>
<rect x="578.3" y="179.7" width="1" height="1"/>
<rect x="615.9" y="706.1" width="1" height="1"/>
<rect x="615.9" y="668.5" width="1" height="1"/>
<rect x="615.9" y="630.9" width="1" height="1"/>
<rect x="615.9" y="593.3" width="1" height="1"/>
<rect x="615.9" y="555.7" width="1" height="1"/>
<rect x="615.9" y="518.1" width="1" height="1"/>
<rect x="615.9" y="480.5" width="1" height="1"/>
<rect x="615.9" y="442.9" width="1" height="1"/>
<rect x="615.9" y="405.3" width="1" height="1"/>
<rect x="615.9" y="367.7" width="1" height="1"/>
<rect x="615.9" y="330.1" width="1" height="1"/>
<rect x="615.9" y="292.5" width="1" height="1"/>
<rect x="615.9" y="254.9" width="1" height="1"/>
<rect x="615.9" y="217.3" width="1" height="1"/>
<rect x="615.9" y="179.7" width="1" height="1"/>
<rect x="653.5" y="706.1" width="1" height="1"/>
<rect x="653.5" y="668.5" width="1" height="1"/>
<rect x="653.5" y="630.9" width="1" height="1"/>
<rect x="653.5" y="593.3" width="1" height="1"/>
<rect x="653.5" y="555.7" width="1" height="1"/>
<rect x="653.5" y="518.1" width="1" height="1"/>
<rect x="653.5" y="480.5" width="1" height="1"/>
<rect x="653.5" y="442.9" width="1" height="1"/>
<rect x="653.5" y="405.3" width="1" height="1"/>
<rect x="653.5" y="367.7" width="1" height="1"/>
<rect x="653.5" y="330.1" width="1" height="1"/>
<rect x="653.5" y="292.5" width="1" height="1"/>
<rect x="653.5" y="254.9" width="1" height="1"/>
<rect x="653.5" y="217.3" width="1" height="1"/>
<rect x="653.5" y="179.7" width="1" height="1"/>
<rect x="691.1" y="706.1" width="1" height="1"/>
<rect x="691.1" y="668.5" width="1" height="1"/>
<rect x="691.1" y="630.9" width="1" height="1"/>
<rect x="691.1" y="593.3" width="1" height="1"/>
<rect x="691.1" y="555.7" width="1" height="1"/>
<rect x="691.1" y="518.1" width="1" height="1"/>
<rect x="691.1" y="480.5" width="1" height="1"/>
<rect x="691.1" y="442.9" width="1" height="1"/>
<rect x="691.1" y="405.3" width="1" height="1"/>
<rect x="691.1" y="367.7" width="1" height="1"/>
<rect x="691.1" y="330.1" width="1" height="1"/>
<rect x="691.1" y="292.5" width="1" height="1"/>
<rect x="691.1" y="254.9" width="1" height="1"/>
<rect x="691.1" y="217.3" width="1" height="1"/>
<rect x="691.1" y="179.7" width="1" height="1"/>
<rect x="728.7" y="706.1" width="1" height="1"/>
<rect x="728.7" y="668.5" width="1" height="1"/>
<rect x="728.7" y="630.9" width="1" height="1"/>
<rect x="728.7" y="593.3" width="1" height="1"/>
<rect x="728.7" y="555.7" width="1" height="1"/>
<rect x="728.7" y="518.1" width="1" height="1"/>
<rect x="728.7" y="480.5" width="1" height="1"/>
<rect x="728.7" y="442.9" width="1" height="1"/>
<rect x="728.7" y="405.3" width="1" height="1"/>
<rect x="728.7" y="367.7" width="1" height="1"/>
<rect x="728.7" y="330.1" width="1" height="1"/>
<rect x="728.7" y="292.5" width="1" height="1"/>
<rect x="728.7" y="254.9" width="1" height="1"/>
<rect x="728.7" y="217.3" width="1" height="1"/>
<rect x="728.7" y="179.7" width="1" height="1"/>
<rect x="766.3" y="706.1" width="1" height="1"/>
<rect x="766.3" y="668.5" width="1" height="1"/>
<rect x="766.3" y="630.9" width="1" height="1"/>
<rect x="766.3" y="593.3" width="1" height="1"/>
<rect x="766.3" y="555.7" width="1" height="1"/>
<rect x="766.3" y="518.1" width="1" height="1"/>
<rect x="766.3" y="480.5" width="1" height="1"/>
<rect x="766.3" y="442.9" width="1" height="1"/>
<rect x="766.3" y="405.3" width="1" height="1"/>
<rect x="766.3" y="367.7" width="1" height="1"/>
<rect x="766.3" y="330.1" width="1" height="1"/>
<rect x="766.3" y="292.5" width="1" height="1"/>
<rect x="766.3" y="254.9" width="1" height="1"/>
<rect x="766.3" y="217.3" width="1" height="1"/>
<rect x="766.3" y="179.7" width="1" height="1"/>
<rect x="803.9" y="706.1" width="1" height="1"/>
<rect x="803.9" y="668.5" width="1" height="1"/>
<rect x="803.9" y="630.9" width="1" height="1"/>
<rect x="803.9" y="593.3" width="1" height="1"/>
<rect x="803.9" y="555.7" width="1" height="1"/>
<rect x="803.9" y="518.1" width="1" height="1"/>
<rect x="803.9" y="480.5" width="1" height="1"/>
<rect x="803.9" y="442.9" width="1" height="1"/>
<rect x="803.9" y="405.3" width="1" height="1"/>
<rect x="803.9" y="367.7" width="1" height="1"/>
<rect x="803.9" y="330.1" width="1" height="1"/>
<rect x="803.9" y="292.5" width="1" height="1"/>
<rect x="803.9" y="254.9" width="1" height="1"/>
<rect x="803.9" y="217.3" width="1" height="1"/>
<rect x="803.9" y="179.7" width="1" height="1"/>
<rect x="841.5" y="706.1" width="1" height="1"/>
<rect x="841.5" y="668.5" width="1" height="1"/>
<rect x="841.5" y="630.9" width="1" height="1"/>
<rect x="841.5" y="593.3" width="1" height="1"/>
<rect x="841.5" y="555.7" width="1" height="1"/>
<rect x="841.5" y="518.1" width="1" height="1"/>
<rect x="841.5" y="480.5" width="1" height="1"/>
<rect x="841.5" y="442.9" width="1" height="1"/>
<rect x="841.5" y="405.3" width="1" height="1"/>
<rect x="841.5" y="367.7" width="1" height="1"/>
<rect x="841.5" y="330.1" width="1" height="1"/>
<rect x="841.5" y="292.5" width="1" height="1"/>
<rect x="841.5" y="254.9" width="1" height="1"/>
<rect x="841.5" y="217.3" width="1" height="1"/>
<rect x="841.5" y="179.7" width="1" height="1"/>
<rect x="879.1" y="706.1" width="1" height="1"/>
<rect x="879.1" y="668.5" width="1" height="1"/>
<rect x="879.1" y="630.9" width="1" height="1"/>
<rect x="879.1" y="593.3" width="1" height="1"/>
<rect x="879.1" y="555.7" width="1" height="1"/>
<rect x="879.1" y="518.1" width="1" height="1"/>
<rect x="879.1" y="480.5" width="1" height="1"/>
<rect x="879.1" y="442.9" width="1" height="1"/>
<rect x="879.1" y="405.3" width="1" height="1"/>
<rect x="879.1" y="367.7" width="1" height="1"/>
<rect x="879.1" y="330.1" width="1" height="1"/>
<rect x="879.1" y="292.5" width="1" height="1"/>
<rect x="879.1" y="254.9" width="1" height="1"/>
<rect x="879.1" y="217.3" width="1" height="1"/>
<rect x="879.1" y="179.7" width="1" height="1"/>
<rect x="916.7" y="706.1" width="1" height="1"/>
<rect x="916.7" y="668.5" width="1" height="1"/>
<rect x="916.7" y="630.9" width="1" height="1"/>
<rect x="916.7" y="593.3" width="1" height="1"/>
<rect x="916.7" y="555.7" width="1" height="1"/>
<rect x="916.7" y="518.1" width="1" height="1"/>
<rect x="916.7" y="480.5" width="1" height="1"/>
<rect x="916.7" y="442.9" width="1" height="1"/>
<rect x="916.7" y="405.3" width="1" height="1"/>
<rect x="916.7" y="367.7" width="1" height="1"/>
<rect x="916.7" y="330.1" width="1" height="1"/>
<rect x="916.7" y="292.5" width="1" height="1"/>
<rect x="916.7" y="254.9" width="1" height="1"/>
<rect x="916.7" y="217.3" width="1" height="1"/>
<rect x="916.7" y="179.7" width="1" height="1"/>
<rect x="954.3" y="706.1" width="1" height="1"/>
<rect x="954.3" y="668.5" width="1" height="1"/>
<rect x="954.3" y="630.9" width="1" height="1"/>
<rect x="954.3" y="593.3" width="1" height="1"/>
<rect x="954.3" y="555.7" width="1" height="1"/>
<rect x="954.3" y="518.1" width="1" height="1"/>
<rect x="954.3" y="480.5" width="1" height="1"/>
<rect x="954.3" y="442.9" width="1" height="1"/>
<rect x="954.3" y="405.3" width="1" height="1"/>
<rect x="954.3" y="367.7" width="1" height="1"/>
<rect x="954.3" y="330.1" width="1" height="1"/>
<rect x="954.3" y="292.5" width="1" height="1"/>
<rect x="954.3" y="254.9" width="1" height="1"/>
<rect x="954.3" y="217.3" width="1" height="1"/>
<rect x="954.3" y="179.7" width="1" height="1"/>
<rect x="991.9" y="706.1" width="1" height="1"/>
<rect x="991.9" y="668.5" width="1" height="1"/>
<rect x="991.9" y="630.9" width="1" height="1"/>
<rect x="991.9" y="593.3" width="1" height="1"/>
<rect x="991.9" y="555.7" width="1" height="1"/>
<rect x="991.9" y="518.1" width="1" height="1"/>
<rect x="991.9" y="480.5" width="1" height="1"/>
<rect x="991.9" y="442.9" width="1" height="1"/>
<rect x="991.9" y="405.3" width="1" height="1"/>
<rect x="991.9" y="367.7" width="1" height="1"/>
<rect x="991.9" y="330.1" width="1" height="1"/>
<rect x="991.9" y="292.5" width="1" height="1"/>
<rect x="991.9" y="254.9" width="1" height="1"/>
<rect x="991.9" y="217.3" width="1" height="1"/>
<rect x="991.9" y="179.7" width="1" height="1"/>
<rect x="1029.5" y="706.1" width="1" height="1"/>
<rect x="1029.5" y="668.5" width="1" height="1"/>
<rect x="1029.5" y="630.9" width="1" height="1"/>
<rect x="1029.5" y="593.3" width="1" height="1"/>
<rect x="1029.5" y="555.7" width="1" height="1"/>
<rect x="1029.5" y="518.1" width="1" height="1"/>
<rect x="1029.5" y="480.5" width="1" height="1"/>
<rect x="1029.5" y="442.9" width="1" height="1"/>
<rect x="1029.5" y="405.3" width="1" height="1"/>
<rect x="1029.5" y="367.7" width="1" height="1"/>
<rect x="1029.5" y="330.1" width="1" height="1"/>
<rect x="1029.5" y="292.5" width="1" height="1"/>
<rect x="1029.5" y="254.9" width="1" height="1"/>
<rect x="1029.5" y="217.3" width="1" height="1"/>
<rect x="1029.5" y="179.7" width="1" height="1"/>
<rect x="1067.1" y="706.1" width="1" height="1"/>
<rect x="1067.1" y="668.5" width="1" height="1"/>
<rect x="1067.1" y="630.9" width="1" height="1"/>
<rect x="1067.1" y="593.3" width="1" height="1"/>
<rect x="1067.1" y="555.7" width="1" height="1"/>
<rect x="1067.1" y="518.1" width="1" height="1"/>
<rect x="1067.1" y="480.5" width="1" height="1"/>
<rect x="1067.1" y="442.9" width="1" height="1"/>
<rect x="1067.1" y="405.3" width="1" height="1"/>
<rect x="1067.1" y="367.7" width="1" height="1"/>
<rect x="1067.1" y="330.1" width="1" height="1"/>
<rect x="1067.1" y="292.5" width="1" height="1"/>
<rect x="1067.1" y="254.9" width="1" height="1"/>
<rect x="1067.1" y="217.3" width="1" height="1"/>
<rect x="1067.1" y="179.7" width="1" height="1"/>
<rect x="1104.7" y="706.1" width="1" height="1"/>
<rect x="1104.7" y="668.5" width="1" height="1"/>
<rect x="1104.7" y="630.9" width="1" height="1"/>
<rect x="1104.7" y="593.3" width="1" height="1"/>
<rect x="1104.7" y="555.7" width="1" height="1"/>
<rect x="1104.7" y="518.1" width="1" height="1"/>
<rect x="1104.7" y="480.5" width="1" height="1"/>
<rect x="1104.7" y="442.9" width="1" height="1"/>
<rect x="1104.7" y="405.3" width="1" height="1"/>
<rect x="1104.7" y="367.7" width="1" height="1"/>
<rect x="1104.7" y="330.1" width="1" height="1"/>
<rect x="1104.7" y="292.5" width="1" height="1"/>
<rect x="1104.7" y="254.9" width="1" height="1"/>
<rect x="1104.7" y="217.3" width="1" height="1"/>
<rect x="1104.7" y="179.7" width="1" height="1"/>
</g>
<!--DRAWSTART-->
<g fill="none" stroke="#3d5819" stroke-width="1.05" stroke-linejoin="round">
<polyline points="620.0,289.3 616.0,289.3 615.3,283.3 608.3,271.3 604.0,270.3 599.3,270.3 564.7,280.7 554.7,277.3 546.7,278.3 552.0,294.3 529.3,300.7 526.0,293.3 493.1,303.6 493.6,312.7 492.0,318.0 481.3,327.3 493.6,337.3 479.3,348.7"/>
<polyline points="479.3,348.3 480.0,354.3 485.3,357.7 495.3,356.3 504.3,366.3 514.9,363.7 516.0,353.0 526.7,351.0 534.0,347.0 544.7,355.0 543.7,369.0 540.7,369.7"/>
<polyline points="514.9,363.7 530.7,373.7 540.0,374.3 542.7,382.3"/>
<polyline points="526.7,351.0 532.0,363.7 541.3,369.7 566.0,381.0 577.3,378.3 578.0,373.7 585.3,372.3 596.7,380.3 620.0,376.3"/>
<polyline points="554.0,377.0 547.3,385.0"/>
<polyline points="565.3,383.0 563.3,387.7 567.3,399.7"/>
<polyline points="574.7,381.0 576.0,387.7"/>
<polyline points="592.7,382.3 597.3,391.0 602.7,386.3 602.0,381.0"/>
<polyline points="597.3,391.0 596.4,404.3"/>
<polyline points="613.3,345.0 609.3,350.3 609.3,357.7 616.7,367.0 618.0,376.3"/>
<polyline points="465.3,352.3 492.0,372.3 496.7,384.3 523.3,395.0"/>
<polyline points="474.0,378.3 496.7,384.3"/>
<polyline points="454.4,359.7 458.7,357.0 465.6,355.9 467.3,365.7 465.3,369.0 467.3,373.0 472.7,377.7 471.3,383.0 461.3,385.0 456.0,381.7 454.4,374.3 455.3,365.0 454.4,359.7"/>
<polyline points="442.4,398.3 446.4,386.6 450.0,387.7 451.3,395.0 447.3,398.6 442.4,398.3"/>
<polyline points="450.7,395.4 465.3,395.0 496.7,384.3"/>
<polyline points="472.7,407.7 484.0,405.7 486.0,407.7 523.3,397.7"/>
<polyline points="470.7,406.3 464.7,409.0 452.7,423.0 455.3,437.0 451.7,439.0 448.7,423.7 444.7,420.3 428.0,432.3 429.3,445.0"/>
<polyline points="470.7,406.3 476.0,423.7 480.7,424.3 480.7,438.3 500.0,432.3 505.3,433.7 507.3,445.0"/>
<polyline points="480.7,424.3 504.0,403.7"/>
<polyline points="500.7,429.0 523.3,399.0"/>
<polyline points="506.0,432.3 559.3,420.3"/>
<polyline points="507.3,437.7 516.0,435.4 530.7,444.3"/>
<polyline points="610.0,274.0 615.3,283.3 616.0,289.3 648.0,288.7 654.7,302.7 639.3,308.7 635.3,315.3 638.0,332.7 630.7,339.3 615.3,343.3 610.0,348.7"/>
<polyline points="623.3,259.3 628.7,255.3 636.7,255.1 639.3,257.3 634.7,263.3 630.0,264.4 624.0,262.7 623.3,259.3"/>
<polyline points="641.3,268.0 648.0,265.3 659.3,265.3 667.3,267.3 672.7,277.3 660.7,278.7 649.3,277.3 641.3,268.0"/>
<polyline points="679.3,277.3 682.7,273.3 687.3,272.4 692.0,274.0 694.7,278.7 692.7,283.3 679.3,277.3"/>
<polyline points="654.0,350.0 653.3,339.3 655.3,335.3 662.7,327.3 660.4,319.3 672.0,315.3 676.4,310.7 671.3,298.7 678.0,291.6 686.7,290.0 688.0,297.3 694.0,303.3 707.3,302.0 714.0,311.3 729.3,315.3 724.7,328.7 726.7,336.7 732.7,334.0 737.3,342.7 743.3,340.7 754.7,344.0 756.7,350.0"/>
<polyline points="655.3,335.3 664.0,345.3 671.3,346.0 674.0,350.0"/>
<polyline points="653.7,345.0 653.7,369.7"/>
<polyline points="664.7,345.0 672.7,347.0 678.7,355.4 687.3,353.0 690.0,373.7 697.3,389.0 679.3,393.7 675.6,398.3 682.0,415.0 696.0,411.0 698.7,417.7 703.3,419.7 708.7,427.7 712.0,444.3"/>
<polyline points="668.0,347.7 659.6,369.7"/>
<polyline points="682.0,355.7 663.3,375.7"/>
<polyline points="690.0,373.7 682.7,376.3 656.0,406.3"/>
<polyline points="679.3,407.0 661.3,417.7"/>
<polyline points="692.7,444.3 704.0,432.3 708.7,431.7"/>
<polyline points="754.0,345.0 760.7,357.7 754.7,359.0 751.3,369.0 754.7,377.7 764.0,375.0 766.0,385.0 774.0,384.3 782.0,393.7 790.7,390.3 803.3,401.0 802.7,415.7 790.7,417.7 787.3,434.3 790.7,444.3"/>
<polyline points="428.7,440.0 429.3,452.0 428.7,458.0 431.3,467.3 429.3,474.7 433.3,490.0 439.3,487.3 446.0,489.6 448.0,497.3 441.3,504.0 444.7,513.3 454.0,512.0 463.3,520.0 463.7,527.3 452.0,530.0 452.0,540.0"/>
<polyline points="507.3,440.0 508.0,446.0 496.0,447.3 490.7,452.7 491.3,458.7 485.3,470.0 484.7,476.0 486.0,480.0 492.0,482.7 492.7,489.3 502.0,486.7 506.7,498.7 504.0,506.0 490.4,508.7 492.0,519.3 487.3,530.7 496.0,536.0 494.0,540.0"/>
<polyline points="490.7,462.7 505.3,459.3 521.3,452.0 533.3,449.3"/>
<polyline points="509.3,447.3 521.3,452.0"/>
<polyline points="525.3,440.0 533.3,449.3 538.7,453.3 553.3,455.3 567.3,466.0"/>
<polyline points="487.3,468.0 519.3,472.7"/>
<polyline points="492.7,489.3 520.0,478.0"/>
<polyline points="535.3,477.3 518.7,493.3 511.3,509.3 512.0,540.0"/>
<polyline points="498.7,532.0 505.3,520.7 512.0,517.3"/>
<polyline points="542.7,510.7 561.3,506.0 563.3,520.0 588.0,509.3 596.0,514.7 598.7,523.3 592.0,535.3 591.3,540.0"/>
<polyline points="542.7,510.7 546.0,528.0 544.7,540.0"/>
<polyline points="596.0,514.7 601.3,510.7"/>
<polyline points="608.0,523.3 610.7,540.0"/>
<polyline points="696.7,440.0 690.0,447.3 674.0,456.7"/>
<polyline points="712.0,440.0 712.0,463.3 698.0,466.7 702.0,488.0 688.7,492.7 682.0,487.3 676.0,481.3"/>
<polyline points="710.0,446.0 686.7,450.4"/>
<polyline points="710.7,459.3 675.3,467.3"/>
<polyline points="676.0,480.0 698.7,482.7"/>
<polyline points="682.0,487.3 676.7,492.0 680.0,506.0 670.0,508.7 652.7,503.3 646.7,512.7"/>
<polyline points="650.0,525.3 674.7,526.4 676.7,540.0"/>
<polyline points="650.0,527.3 653.3,535.3 650.0,539.3 640.7,540.0"/>
<polyline points="789.3,440.0 791.3,448.7 802.0,448.0 805.3,466.0 789.3,469.3 793.3,479.3 781.3,480.7 777.3,486.7 774.0,498.0 784.7,497.3 788.7,519.3 772.7,523.3 774.0,535.3 756.7,534.0 755.3,540.0"/>
<polyline points="452.0,535.0 452.0,540.3 463.3,549.0 467.3,557.4 488.7,551.3 496.0,535.0"/>
<polyline points="480.7,570.3 484.7,565.4 488.7,569.9 486.0,575.0 482.0,575.0 480.7,570.3"/>
<polyline points="507.3,561.0 512.0,535.0 518.0,560.3"/>
<polyline points="544.7,535.0 543.3,541.7 528.0,541.0 526.7,547.7 528.7,558.7 520.0,564.3 516.7,561.0 501.3,563.7 503.3,582.3 510.0,585.0 506.7,594.3 516.0,600.3 526.7,602.3 536.7,614.3 544.7,615.7 551.3,623.7 557.3,620.3 557.3,613.7 569.3,615.0 570.7,625.7 575.3,629.7 592.0,627.0 598.7,631.7 615.3,628.3 617.3,616.3 620.0,614.3"/>
<polyline points="592.7,535.0 592.0,553.0 598.7,553.0 604.7,559.0 609.3,556.6 620.0,558.3"/>
<polyline points="609.3,535.0 612.0,555.0"/>
<polyline points="619.3,558.3 622.7,573.7 629.3,573.9 632.7,580.3 630.0,586.3 624.0,589.0 620.7,595.7 622.7,611.7 617.3,616.3 615.3,627.7 610.0,629.7"/>
<polyline points="653.3,535.0 647.3,541.9 654.7,595.7 654.0,609.0"/>
<polyline points="650.0,535.0 645.3,538.3 640.7,539.7 638.7,547.0 639.3,555.0 630.7,573.7"/>
<polyline points="654.0,609.0 658.7,612.3 659.3,618.3 655.3,624.3 645.3,626.3 638.0,623.7 637.3,619.0 641.3,613.7 654.0,609.0"/>
<polyline points="645.3,543.0 659.3,567.0 660.7,573.7 664.7,577.7 667.3,585.7 672.0,589.7 675.3,600.3 672.7,604.3 673.3,622.3"/>
<polyline points="664.7,577.7 670.0,578.3 703.3,600.3 704.0,604.3"/>
<polyline points="675.3,600.3 688.7,615.0"/>
<polyline points="670.7,626.3 674.0,623.0 679.3,622.7 676.7,627.0 672.0,627.3 670.7,626.3"/>
<polyline points="698.0,611.0 703.3,604.3 707.3,605.7 707.3,612.3 703.3,614.3 698.0,613.7 698.0,611.0"/>
<polyline points="676.0,535.0 676.7,539.7 683.3,543.0 685.3,553.7 675.3,556.3 679.3,568.3 693.3,564.3 698.7,567.0 700.7,575.0 697.3,584.3 707.3,584.3 710.7,589.7 723.3,593.7 738.0,572.3 749.3,578.3 762.7,559.0 762.0,551.7 753.3,547.0 756.7,535.0"/>
</g>
<polygon points="523.3,395.7 542.0,393.1 543.9,381.9 547.3,385.1 547.1,396.3 562.3,403.2 580.9,397.5 576.1,387.2 586.3,397.9 583.1,402.7 570.8,405.7 571.3,412.1 580.4,415.7 586.8,413.9 596.4,404.3 591.6,414.4 598.0,424.7 616.1,437.8 627.9,434.7 647.8,416.6 647.2,393.6 654.7,370.6 659.6,370.0 662.8,376.2 653.4,394.2 653.4,407.3 655.9,407.3 654.0,417.2 661.5,418.5 653.4,423.5 634.1,438.4 632.3,447.1 636.6,463.4 639.0,465.8 663.6,465.2 673.8,456.8 669.6,464.6 675.6,467.4 670.8,474.2 676.2,480.8 664.8,472.4 654.0,471.4 633.6,475.4 631.2,479.6 634.8,486.2 642.6,509.6 646.8,512.6 650.4,527.6 637.2,509.6 628.8,495.2 620.4,494.0 610.2,495.8 605.4,510.8 607.8,523.4 603.6,522.8 600.6,510.8 603.6,501.2 602.4,494.0 598.8,476.0 589.2,467.6 582.0,462.2 568.8,478.2 546.0,475.4 520.2,477.2 519.0,473.6 546.0,470.0 566.4,470.6 567.0,465.8 581.6,453.8 594.0,463.4 601.2,471.8 604.8,471.8 609.6,468.8 612.0,464.0 611.4,453.2 604.9,435.9 584.7,422.9 571.9,419.2 559.1,420.6 562.8,415.5 562.3,405.9 544.1,397.9 523.9,399.7" fill="#699a2e" stroke="#699a2e" stroke-width="0.6"/>
<g stroke="#e01010" stroke-width="1.2" fill="none"><line x1="596" y1="443.5" x2="637" y2="443.5"/><line x1="616.5" y1="423" x2="616.5" y2="464"/><circle cx="616.5" cy="443.5" r="5.2"/></g>
<!--DRAWEND-->
</svg>
<!--/GRID-->
<div id="vscroll" class="a"></div>
<div id="hscroll" class="a"></div>
<div id="cornerL" class="a"></div>
<div id="scalebox" class="a">0.1 &lt; 1</div>
<div id="cmdsep" class="a"></div>
<div id="cmdhist" class="a"><i>Command:</i> blockedit</div>
<div id="cmdline" class="a"></div>
<div id="status" class="a"></div>
<!--BOTTOM-->
<!-- canvas bottom/scroll area -->
<svg class="a" style="left:72px;top:732px" width="1083" height="67" viewBox="72 732 1083 67">
<rect x="155.5" y="737.5" width="881" height="7.5" rx="3.75" fill="#7d7d7d"/>
</svg>
<div class="a" style="left:73px;top:778px;font-size:13.5px;line-height:15px;color:#111;letter-spacing:0px">Command:</div>
<div class="a" style="left:142px;top:776px;width:985px;height:18px;background:#fff"></div>
<div class="a" style="left:1127px;top:772px;width:26px;height:26px;background:linear-gradient(#f6f6f6,#e6e6e6);border:1px solid #b8b8b8"></div>
<svg class="a" style="left:1130px;top:775px" width="20" height="20" viewBox="0 0 20 20"><rect x="2.5" y="5.5" width="14" height="10" fill="#f4f4f4" stroke="#333" stroke-width="1"/><rect x="2" y="5" width="15" height="2.5" fill="#111"/><rect x="14.5" y="5.5" width="1" height="1" fill="#fff"/></svg>
<!-- status bar -->
<div class="st" style="left:2px;top:807px">47.0937,12.7851</div>
<div class="st" style="left:2px;top:827px">@47.0937,12.7851</div>
<div class="a" style="left:253px;top:802px;width:1px;height:40px;background:#9a9a9a"></div>
<div class="st" style="left:256px;top:807px">48.7984&lt;15°</div>
<div class="st" style="left:256px;top:827px">@48.7984&lt;15°</div>
<div class="st" style="left:598px;top:815px;letter-spacing:0.4px">Select entity or region</div>
<div class="st" style="left:949px;top:815px;letter-spacing:0.4px">No entities selected.</div>
<svg class="a" style="left:0;top:799px" width="1500" height="45" viewBox="0 799 1500 45">
<circle cx="509.7" cy="822" r="2.8" fill="#c4c4c4"/>
<circle cx="943.6" cy="822" r="2.8" fill="#c4c4c4"/>
<circle cx="1272.5" cy="822" r="2.8" fill="#c4c4c4"/>
<path d="M726 806.5 c-5 0 -8.3 3 -8.3 8 v13 c0 5 3.3 8.3 8.3 8.3 c5 0 8.3 -3.3 8.3 -8.3 v-13 c0 -5 -3.3 -8 -8.3 -8 z" fill="#fff" stroke="#333" stroke-width="0.9"/>
<path d="M717.7 820 h16.6 M726 806.5 v13.5" stroke="#333" stroke-width="0.8"/>
<rect x="724" y="809" width="4" height="7" rx="2" fill="#fff" stroke="#333" stroke-width="0.8"/>
</svg>

<!--/BOTTOM-->
<!--DOCK-->
<div class="a" style="left:1154px;top:108px;width:1px;height:690px;background:#c4c4c4"></div>
<div class="a" style="left:1155px;top:108px;width:300px;height:690px;background:#ececec"></div>
<!-- block list title -->
<div class="a" style="left:1155px;top:108px;width:300px;height:22px;background:linear-gradient(#efefef,#e2e2e2);font-size:12px;line-height:24px;text-align:center;color:#2a2a2a;padding-left:34px">Block List</div>
<div class="a" style="left:1155px;top:130px;width:300px;height:26px;background:#c8c8c8"></div>
<div class="a" style="left:1155px;top:155px;width:299px;height:152px;background:#fff"></div>
<div class="a" style="left:1155px;top:155px;width:299px;height:1px;background:#b4b4b4"></div>
<div class="a" style="left:1155px;top:156px;width:299px;height:21px;background:#d5d5d5"></div>
<div class="a" style="left:1155px;top:307px;width:300px;height:1px;background:#c4c4c4"></div>
<!-- layer list title -->
<div class="a" style="left:1155px;top:309px;width:300px;height:22px;background:linear-gradient(#efefef,#e2e2e2);font-size:12px;line-height:24px;text-align:center;color:#2a2a2a;padding-left:34px">Layer List</div>
<div class="a" style="left:1155px;top:331px;width:300px;height:26px;background:#c8c8c8"></div>
<div class="a" style="left:1155px;top:357px;width:299px;height:441px;background:#fff"></div>
<div class="a" style="left:1155px;top:398px;width:299px;height:20px;background:#0a47d8"></div>
<div class="a" style="left:1454px;top:357px;width:1px;height:441px;background:#c8c8c8"></div>
<!-- list text -->
<div class="a" style="left:1205px;top:158px;font-size:13px;line-height:18px;color:#111">Model (*Model_Space)</div>
<div class="a" style="left:1205px;top:178px;font-size:13px;line-height:18px;color:#111">Layout1 (*Paper_Space)</div>
<div class="a" style="left:1205px;top:198px;font-size:13px;line-height:18px;color:#111">Bench</div>
<div class="a" style="left:1205px;top:218px;font-size:13px;line-height:18px;color:#111">Trash Can</div>
<div class="a" style="left:1205px;top:238px;font-size:13px;line-height:18px;color:#111">Tree A</div>
<div class="a" style="left:1205px;top:258px;font-size:13px;line-height:18px;color:#111">Tree B</div>
<div class="a" style="left:1183px;top:359px;font-size:13px;line-height:18px;color:#111">0</div>
<div class="a" style="left:1183px;top:379px;font-size:13px;line-height:18px;color:#111">Facilities</div>
<div class="a" style="left:1183px;top:399px;font-size:13px;line-height:18px;color:#fff">Paths</div>
<div class="a" style="left:1183px;top:419px;font-size:13px;line-height:18px;color:#111">Plants</div>
<svg class="a" style="left:1140px;top:100px" width="360" height="600" viewBox="1140 100 360 600">
<defs>
<linearGradient id="gDbtn" x1="0" y1="0" x2="0" y2="1"><stop offset="0" stop-color="#fafafa"/><stop offset="1" stop-color="#e9e9e9"/></linearGradient>
<g id="eye"><ellipse cx="0" cy="0" rx="7.4" ry="5.4" fill="currentColor"/><path d="M-5.3 -1 C-5 4.4 5 4.4 5.3 -1 L2.7 -1 C2.3 1.9 -2.3 1.9 -2.7 -1 Z" style="fill:var(--sc,#fff)"/><circle cx="-0.8" cy="-1.2" r="0.8" fill="#888" fill-opacity="0.8"/></g>
<g id="lock"><path d="M-3.3 0 v-3 a3.3 3.3 0 0 1 6.6 0 v3" fill="none" stroke="currentColor" stroke-width="1.3"/><rect x="-5" y="0" width="10" height="7" fill="currentColor"/></g>
<g id="pencil"><path d="M-7 6.7 L-5.6 2.57 L4.9 -7.73 L7.7 -4.87 L-2.8 5.43 Z" fill="#d9a440" stroke="#5a4010" stroke-width="0.7" stroke-linejoin="round"/><path d="M2.2 -5.03 L4.9 -7.73 L7.7 -4.87 L5.0 -2.17 Z" fill="#e62020"/><path d="M-7 6.7 L-5.6 2.57 L-2.8 5.43 Z" fill="#f0dca0"/><path d="M-7 6.7 L-6.3 4.6 L-4.9 6 Z" fill="#3a2a10"/></g>
</defs>
<!-- title buttons -->
<circle cx="1164" cy="118" r="7" fill="#6e6e6e"/><path d="M1161 115 l6 6 M1167 115 l-6 6" stroke="#fff" stroke-width="1.8"/>
<circle cx="1182" cy="118" r="7" fill="#6e6e6e"/><rect x="1180.5" y="114" width="5" height="4" fill="none" stroke="#fff" stroke-width="1"/><rect x="1178.5" y="116.5" width="5" height="4.5" fill="#6e6e6e" stroke="#fff" stroke-width="1"/>
<circle cx="1164" cy="319" r="7" fill="#6e6e6e"/><path d="M1161 316 l6 6 M1167 316 l-6 6" stroke="#fff" stroke-width="1.8"/>
<circle cx="1182" cy="319" r="7" fill="#6e6e6e"/><rect x="1180.5" y="315" width="5" height="4" fill="none" stroke="#fff" stroke-width="1"/><rect x="1178.5" y="317.5" width="5" height="4.5" fill="#6e6e6e" stroke="#fff" stroke-width="1"/>
<!-- block buttons -->
<g fill="url(#gDbtn)">
<rect x="1156" y="131" width="36" height="23.5"/><rect x="1193.5" y="131" width="36" height="23.5"/><rect x="1231" y="131" width="36" height="23.5"/><rect x="1268.5" y="131" width="36" height="23.5"/><rect x="1306" y="131" width="37" height="23.5"/><rect x="1344" y="131" width="35.5" height="23.5"/><rect x="1381" y="131" width="36.5" height="23.5"/><rect x="1419" y="131" width="35" height="23.5"/>
<rect x="1156" y="332" width="58" height="23.5"/><rect x="1216" y="332" width="58" height="23.5"/><rect x="1276" y="332" width="58" height="23.5"/><rect x="1336" y="332" width="58" height="23.5"/><rect x="1396" y="332" width="58" height="23.5"/>
</g>
<use href="#eye" x="1173.5" y="142.5" style="color:#000;--sc:#f2f2f2"/>
<use href="#eye" x="1210.5" y="142.5" style="color:#a8a8a8;--sc:#f2f2f2"/>
<path d="M1247 136.5 v12 M1241 142.5 h12" stroke="#ee0000" stroke-width="3"/>
<path d="M1279.5 142.5 h12" stroke="#f07070" stroke-width="3"/>
<text x="1323" y="147" font-family="Liberation Sans" font-size="12" fill="#9a9a9a" text-anchor="middle">a b</text><line x1="1322.8" y1="137" x2="1322.8" y2="149" stroke="#9a9a9a" stroke-width="0.8"/>
<use href="#pencil" x="1361" y="142.5"/>
<rect x="1393.5" y="136" width="10" height="13" fill="#f0f0f8" stroke="#d8d8e0" stroke-width="0.6"/>
<path d="M1396 138 c3 0 3.5 1 3.5 3.5 v3 h2 l-3 3.5 l-3 -3.5 h2 v-3 c0 -1.5 -0.5 -2 -1.5 -2 z" fill="#7a9ef0"/>
<rect x="1431" y="138" width="10" height="10" fill="#e05a3a" stroke="#c84020" stroke-width="0.6"/><path d="M1433.5 140.5 l5 5 M1438.5 140.5 l-5 5" stroke="#fff" stroke-width="1.3"/>
<!-- block rows -->
<use href="#eye" x="1168.5" y="166.5" style="color:#3a4658;--sc:#d5d5d5"/>
<use href="#eye" x="1169" y="186.5" style="color:#000"/>
<use href="#eye" x="1169" y="206.5" style="color:#000"/>
<use href="#eye" x="1169" y="226.5" style="color:#000"/>
<use href="#eye" x="1169" y="246.5" style="color:#000"/>
<use href="#eye" x="1169" y="266.5" style="color:#000"/>
<use href="#pencil" x="1191" y="266"/>
<!-- layer buttons -->
<use href="#eye" x="1185" y="343.5" style="color:#000;--sc:#f2f2f2"/>
<use href="#eye" x="1245" y="343.5" style="color:#a8a8a8;--sc:#f2f2f2"/>
<path d="M1305 337.5 v12 M1299 343.5 h12" stroke="#ee0000" stroke-width="3"/>
<path d="M1358.5 343.5 h12" stroke="#ee0000" stroke-width="3"/>
<use href="#pencil" x="1425" y="343.5"/>
<!-- layer rows -->
<rect x="1161.5" y="364.5" width="15" height="8" fill="#fff" stroke="#222" stroke-width="1"/>
<rect x="1161.5" y="384.5" width="15" height="8" fill="#c8c8c8" stroke="#222" stroke-width="1"/>
<rect x="1161.5" y="404.5" width="15" height="8" fill="#c8b890" stroke="#222" stroke-width="1"/>
<rect x="1161.5" y="424.5" width="15" height="8" fill="#5a9a30" stroke="#222" stroke-width="1"/>
<use href="#eye" x="1422.8" y="368" style="color:#000"/>
<use href="#eye" x="1422.8" y="388" style="color:#000"/>
<use href="#eye" x="1422.8" y="407.5" style="color:#1e2e5e;--sc:#0a47d8"/>
<use href="#eye" x="1422.8" y="428" style="color:#000"/>
<use href="#lock" x="1445" y="367.5" style="color:#b8b8b8"/>
<use href="#lock" x="1445" y="387.5" style="color:#b8b8b8"/>
<use href="#lock" x="1445" y="407.5" style="color:#b4c0d4"/>
<use href="#lock" x="1445" y="427.5" style="color:#b8b8b8"/>
<use href="#pencil" x="1401" y="407.5"/>
<!-- dock vertical scrollbar (canvas) -->
<rect x="1142.5" y="303" width="8" height="280" rx="4" fill="#7c7c7c"/>
</svg>

<!--/DOCK-->
<!--RTB-->
<div class="a" style="left:1455px;top:108px;width:45px;height:690px;background:linear-gradient(90deg,#e4e4e4,#ededed 15%,#dedede 55%,#c4c4c4)"></div>
<div class="a" style="left:1454px;top:108px;width:1px;height:690px;background:#d2d2d2"></div>
<svg class="a" style="left:1450px;top:108px" width="50" height="400" viewBox="1450 108 50 400">
<defs>
<g id="wnd"><rect x="0.5" y="0.5" width="27" height="27" fill="#fff" stroke="#111" stroke-width="1"/><rect x="0" y="0" width="28" height="4.5" fill="#111"/><rect x="1.5" y="1" width="3" height="3" fill="#fff"/></g>
</defs>
<g fill="#a8a8a8"><rect x="1462" y="116" width="2" height="2"/><rect x="1468" y="116" width="2" height="2"/><rect x="1474" y="116" width="2" height="2"/><rect x="1480" y="116" width="2" height="2"/><rect x="1486" y="116" width="2" height="2"/></g>
<rect x="1456.5" y="120.5" width="50" height="41.5" rx="6" fill="#b9b9b9"/>
<rect x="1456.5" y="167.5" width="50" height="42.5" rx="6" fill="#b9b9b9"/>
<rect x="1456.5" y="418" width="50" height="42.5" rx="6" fill="#b9b9b9"/>
<g stroke="#555" stroke-width="1" stroke-dasharray="1 2"><line x1="1456" y1="262.5" x2="1500" y2="262.5"/><line x1="1456" y1="410.5" x2="1500" y2="410.5"/></g>
<use href="#wnd" x="1463" y="127"/>
<path d="M1469.5 138 l4 -2.5 v11 l-4 2.5 z" fill="#777"/><path d="M1473.5 135.5 l8 -4 v11 l-8 4 z" fill="#e8e8e8" stroke="#666" stroke-width="0.7"/><path d="M1475.5 143 l4 -8 l0.5 6 z" fill="none" stroke="#ee3333" stroke-width="0.8"/>
<use href="#wnd" x="1463" y="174"/>
<rect x="1469" y="184" width="11" height="8.5" fill="#f0e8c0" stroke="#8a8060" stroke-width="0.7"/><circle cx="1479" cy="192.5" r="4.8" fill="#efe6c0" fill-opacity="0.9" stroke="#8a8060" stroke-width="0.7"/>
<use href="#wnd" x="1463" y="221"/>
<rect x="1468.5" y="230" width="17.5" height="12" rx="2" fill="#f2f2f2" stroke="#b8c8e0" stroke-width="0.8"/>
<use href="#wnd" x="1463" y="277"/>
<g fill="#111"><rect x="1467" y="285" width="4" height="3"/><rect x="1467" y="291" width="4" height="3"/><rect x="1467" y="297" width="4" height="3"/></g>
<g fill="none" stroke="#333" stroke-width="0.8"><rect x="1473.5" y="285" width="13" height="3"/><rect x="1473.5" y="291" width="13" height="3"/><rect x="1473.5" y="297" width="13" height="3"/></g>
<use href="#wnd" x="1463" y="323"/>
<path d="M1469 333 h15 l-6 7 v6 l-3 -2 v-4 z" fill="#9a9a9a" stroke="#555" stroke-width="0.7"/>
<use href="#wnd" x="1463" y="368.5"/>
<path d="M1468.5 376 l6 4 v8 l-6 4 z" fill="#f4f4f4" stroke="#333" stroke-width="0.8"/><rect x="1474.5" y="379" width="9" height="10" rx="1.5" fill="#aaa" stroke="#555" stroke-width="0.6"/><line x1="1466" y1="384" x2="1488" y2="384" stroke="#e06060" stroke-width="0.8" stroke-dasharray="1.5 1"/>
<use href="#wnd" x="1463" y="424.5"/>
<g stroke="#777" stroke-width="0.6"><line x1="1466" y1="432" x2="1476" y2="432"/><line x1="1466" y1="435" x2="1476" y2="435"/><line x1="1466" y1="438" x2="1478" y2="438"/><line x1="1466" y1="441" x2="1478" y2="441"/><line x1="1463" y1="446" x2="1491" y2="446" stroke="#333"/></g>
<text x="1467" y="451" font-family="Liberation Sans" font-size="4" fill="#333">c   command</text>
<use href="#wnd" x="1463" y="472"/>
<rect x="1470" y="481" width="14" height="15" fill="#c8902a" stroke="#8a6020" stroke-width="0.6"/><rect x="1472" y="483" width="10" height="11" fill="#f4f4f4"/><rect x="1474" y="479.5" width="6" height="3" fill="#888"/>
</svg>

<!--/RTB-->
<!--CURSOR-->
<svg class="a" style="left:1250px;top:112px" width="110" height="110" viewBox="1250 112 110 110">
<defs><radialGradient id="gRing" cx="0.5" cy="0.5" r="0.5">
<stop offset="0" stop-color="#ffffff" stop-opacity="0.35"/>
<stop offset="0.78" stop-color="#ffffff" stop-opacity="0.25"/>
<stop offset="0.86" stop-color="#a8c0d8" stop-opacity="0.55"/>
<stop offset="0.93" stop-color="#90aac8" stop-opacity="0.6"/>
<stop offset="1" stop-color="#90aac8" stop-opacity="0"/>
</radialGradient></defs>
<circle cx="1303" cy="165" r="40" fill="url(#gRing)"/>
<path d="M1303.5 165.5 L1303.5 187 L1308.3 182.5 L1311.8 190.5 L1315.2 189 L1311.8 181.2 L1318.3 180.8 Z" fill="#fff" stroke="#000" stroke-width="1.2" stroke-linejoin="round"/>
</svg>
<!--/CURSOR-->
</body></html>
